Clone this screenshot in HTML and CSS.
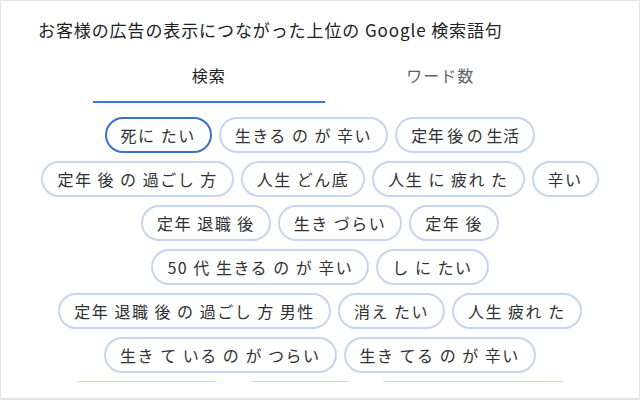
FILE: index.html
```html
<!DOCTYPE html>
<html lang="ja">
<head>
    <meta charset="UTF-8">
    <meta name="viewport" content="width=device-width, initial-scale=1.0">
    <title>上位の検索語句</title>
    <link rel="stylesheet" href="styles.css">
</head>
<body>
    <div class="panel">
        <h2 class="title">お客様の広告の表示につながった上位の Google 検索語句</h2>

        <div class="tabs">
            <div class="tab active">検索</div>
            <div class="tab">ワード数</div>
        </div>

        <div class="chips">
            <div class="chip-row">
                <span class="chip selected">死に たい</span>
                <span class="chip">生きる の が 辛い</span>
                <span class="chip tight">定年 後 の 生活</span>
            </div>
            <div class="chip-row">
                <span class="chip">定年 後 の 過ごし 方</span>
                <span class="chip">人生 どん底</span>
                <span class="chip">人生 に 疲れ た</span>
                <span class="chip">辛い</span>
            </div>
            <div class="chip-row">
                <span class="chip">定年 退職 後</span>
                <span class="chip">生き づらい</span>
                <span class="chip">定年 後</span>
            </div>
            <div class="chip-row">
                <span class="chip">50 代 生きる の が 辛い</span>
                <span class="chip">し に たい</span>
            </div>
            <div class="chip-row">
                <span class="chip">定年 退職 後 の 過ごし 方 男性</span>
                <span class="chip">消え たい</span>
                <span class="chip">人生 疲れ た</span>
            </div>
            <div class="chip-row">
                <span class="chip">生き て いる の が つらい</span>
                <span class="chip">生き てる の が 辛い</span>
            </div>
            <!-- next row is cut off by the panel, only the chip tops show -->
            <div class="chip-row">
                <span class="chip stub stub-lg"></span>
                <span class="chip stub stub-md"></span>
                <span class="chip stub stub-xl"></span>
            </div>
        </div>
    </div>
</body>
</html>
```

FILE: styles.css
```css
body {
    margin: 0;
    font-family: "Noto Sans CJK JP", "Noto Sans", sans-serif;
    background: #ffffff;
}
.panel {
    box-sizing: border-box;
    width: 640px;
    height: 400px;
    border: 1px solid #e4e4e4;
    border-bottom-width: 2px;
    overflow: hidden;
}
.title {
    margin: 0;
    padding: 19px 0 0 37px;
    font-size: 17px;
    font-weight: 400;
    line-height: 20px;
    letter-spacing: 0.9px;
    color: #202124;
}
.tabs {
    display: flex;
    width: 463px;
    margin: 2px 0 0 92px;
}
.tab {
    flex: 1;
    padding: 23px 0 16px;
    border-bottom: 2px solid transparent;
    text-align: center;
    font-size: 16px;
    line-height: 20px;
    letter-spacing: 1px;
    color: #5f6368;
}
.tab.active {
    color: #202124;
    border-bottom-color: #3b78d4;
}
.chips {
    display: flex;
    flex-direction: column;
    gap: 8px;
    height: 265px;
    margin-top: 14px;
    overflow: hidden;
}
.chip-row {
    display: flex;
    justify-content: center;
    gap: 7px;
}
.chip {
    box-sizing: border-box;
    height: 36px;
    padding: 0 14px;
    border: 2px solid #c7d5ee;
    border-radius: 18px;
    font-size: 16px;
    line-height: 32px;
    letter-spacing: 1.5px;
    color: #303134;
    white-space: nowrap;
}
.chip.tight {
    letter-spacing: 0.5px;
    word-spacing: -1px;
}
.chip.selected {
    border-color: #3a72c8;
}
.stub-md { width: 126px; }
.stub-lg { width: 166px; }
.stub-xl { width: 207px; }
```
